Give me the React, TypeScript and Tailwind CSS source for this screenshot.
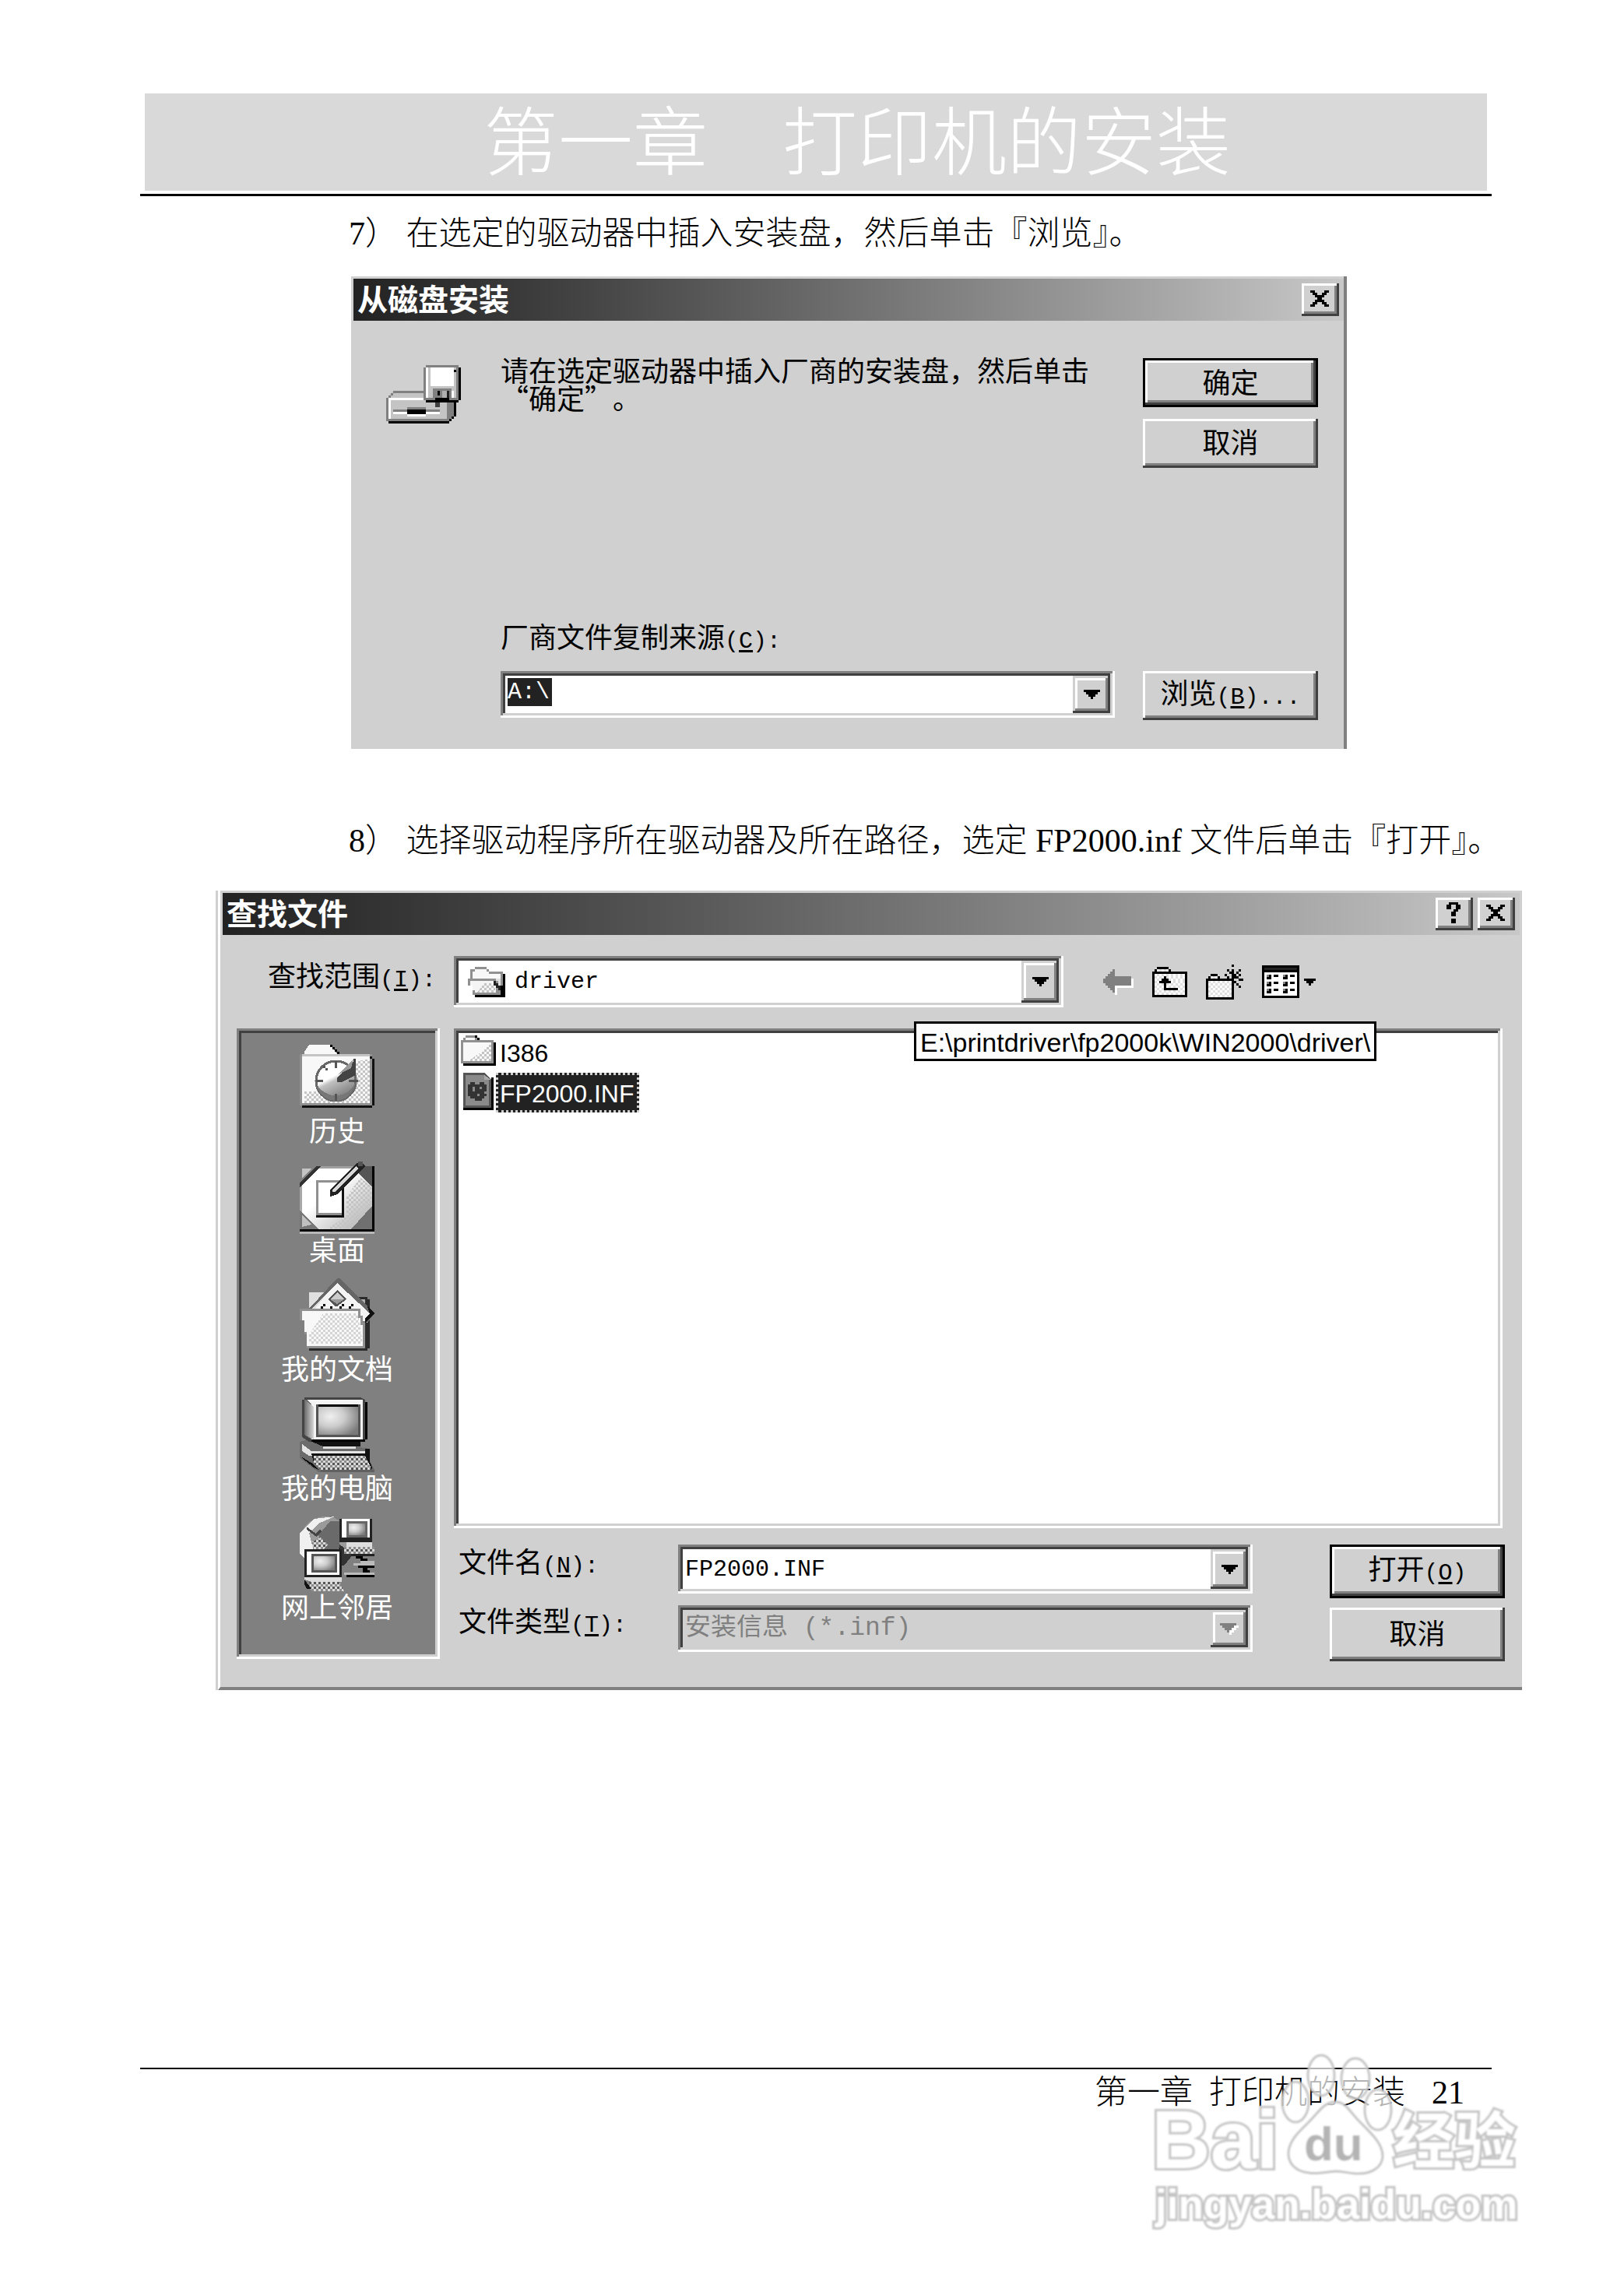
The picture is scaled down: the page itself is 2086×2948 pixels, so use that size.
import React from "react";

interface ChildrenProps {
  children: React.ReactNode;
}

const raised =
  "bg-[#d0d0d0] shadow-[inset_-3px_-3px_0_#404040,inset_3px_3px_0_#fff,inset_-6px_-6px_0_#808080]";
const raisedDefault =
  "bg-[#d0d0d0] border-[3px] border-black shadow-[inset_-3px_-3px_0_#404040,inset_3px_3px_0_#fff,inset_-6px_-6px_0_#808080]";
const raisedArrow =
  "bg-[#d0d0d0] shadow-[inset_-3px_-3px_0_#404040,inset_3px_3px_0_#d0d0d0,inset_-6px_-6px_0_#808080,inset_6px_6px_0_#fff]";
const sunken =
  "p-[6px] shadow-[inset_-3px_-3px_0_#fff,inset_3px_3px_0_#808080,inset_-6px_-6px_0_#d0d0d0,inset_6px_6px_0_#404040]";
const mono = "[font-family:'Liberation_Mono','Noto_Sans_CJK_SC',monospace]";

const shades: Record<string, string> = {
  "#": "#000000",
  d: "#222222",
  g: "#808080",
  o: "#e0e0e0",
  w: "#ffffff",
};

// one character per pixel, three screen pixels each
const Bitmap = ({ rows }: { rows: string[] }) => {
  const width = Math.max(...rows.map((r) => r.length));
  return (
    <svg
      width={width * 3}
      height={rows.length * 3}
      viewBox={`0 0 ${width} ${rows.length}`}
      shapeRendering="crispEdges"
      aria-hidden="true"
      className="shrink-0"
    >
      {rows.map((row, y) =>
        row
          .split("")
          .map((c, x) =>
            shades[c] ? (
              <rect key={`${x}-${y}`} x={x} y={y} width="1" height="1" fill={shades[c]} />
            ) : null
          )
      )}
    </svg>
  );
};

const closeRows = [
  "##....##",
  ".##..##.",
  "..####..",
  "...##...",
  "..####..",
  ".##..##.",
  "##....##",
];

const helpRows = [
  ".####.",
  "##..##",
  "##..##",
  "...##.",
  "..##..",
  "..##..",
  "......",
  "..##..",
  "..##..",
];

const downRows = ["#######", ".#####.", "..###..", "...#..."];
const downOffRows = ["ggggggg.", ".gggggww", "..gggww.", "...gww..", "....w..."];
const smallDownRows = ["#####", ".###.", "..#.."];

const backRows = [
  "....g........",
  "...gg........",
  "..ggg........",
  ".ggggggggggg.",
  "ggggggggggggw",
  "ggggggggggggw",
  ".gggggggggggw",
  "..gggwwwwwwww",
  "...ggw.......",
  "....gw.......",
  ".....w.......",
];

const upRows = [
  "..#####........",
  ".#wowow#.......",
  "###############",
  "#wowowowowowow#",
  "#owow#owowowow#",
  "#wow###owowowo#",
  "#ow#####wowowo#",
  "#wowo#owowowow#",
  "#owow#wowowowo#",
  "#wowo######wow#",
  "#owowowowowowo#",
  "#wowowowowowow#",
  "###############",
];

const newRows = [
  "...........#....",
  "...............",
  ".........#.#..#.",
  "..........##.#..",
  "..###...#..##.#.",
  ".#wow#...#.###..",
  "############..##",
  "#owowowowow##...",
  "#wowowowowo#.#..",
  "#owowowowow#..#.",
  "#wowowowowo#....",
  "#owowowowow#....",
  "#wowowowowo#....",
  "#owowowowow#....",
  "############....",
];

const viewRows = [
  "################",
  "#dddddddddddddd#",
  "################",
  "#wwwwwwwwwwwwww#",
  "#wg#w##wwg#w##w#",
  "#w##wwwww##wwww#",
  "#wwwwwwwwwwwwww#",
  "#wg#w##wwg#w##w#",
  "#w##wwwww##wwww#",
  "#wwwwwwwwwwwwww#",
  "#wg#w##wwg#w##w#",
  "#w##wwwww##wwww#",
  "#wwwwwwwwwwwwww#",
  "################",
];

const PatternDefs = () => (
  <svg width="0" height="0" className="absolute" aria-hidden="true">
    <defs>
      <pattern id="dither" width="2" height="2" patternUnits="userSpaceOnUse">
        <rect width="1" height="1" fill="#c4c4c4" />
        <rect x="1" y="1" width="1" height="1" fill="#c4c4c4" />
      </pattern>
      <pattern id="keys" width="2" height="2" patternUnits="userSpaceOnUse">
        <rect width="2" height="2" fill="#d8d8d8" />
        <rect width="1" height="1" fill="#555" />
        <rect x="1" y="1" width="1" height="1" fill="#8c8c8c" />
      </pattern>
      <radialGradient id="screen" cx="30%" cy="35%" r="80%">
        <stop offset="0" stopColor="#f0f0f0" />
        <stop offset="0.45" stopColor="#cccccc" />
        <stop offset="1" stopColor="#7a7a7a" />
      </radialGradient>
      <linearGradient id="dial" x1="0.2" y1="0" x2="0.7" y2="1">
        <stop offset="0.4" stopColor="#ffffff" />
        <stop offset="0.5" stopColor="#c0c0c0" />
        <stop offset="1" stopColor="#707070" />
      </linearGradient>
      <linearGradient id="sheet" x1="0" y1="0" x2="1" y2="1">
        <stop offset="0.4" stopColor="#ffffff" />
        <stop offset="1" stopColor="#a8a8a8" />
      </linearGradient>
      <linearGradient id="side" x1="0" y1="0" x2="1" y2="0">
        <stop offset="0" stopColor="#6a6a6a" />
        <stop offset="1" stopColor="#d8d8d8" />
      </linearGradient>
    </defs>
  </svg>
);

const Icon = ({
  children,
  w = 32,
  h = 32,
}: {
  children: React.ReactNode;
  w?: number;
  h?: number;
}) => (
  <svg
    width={w * 3}
    height={h * 3}
    viewBox={`0 0 ${w} ${h}`}
    shapeRendering="crispEdges"
    aria-hidden="true"
    className="shrink-0"
  >
    {children}
  </svg>
);

const DriveIcon = () => (
  <Icon h={25}>
    <path d="M1 14V13L3 11H17V15H1Z" fill="#c4c4c4" />
    <path d="M3 11H16V12H3ZM2 12H3V13H2ZM1 13H2V14H1Z" fill="#808080" />
    <path d="M26 15H29V22L26 24Z" fill="#808080" />
    <rect y="14" width="27" height="10" fill="#808080" />
    <rect x="1" y="14" width="25" height="9" fill="#fff" />
    <rect x="2" y="15" width="24" height="8" fill="#c4c4c4" />
    <rect x="3" y="19" width="20" height="1" fill="#808080" />
    <rect x="3" y="20" width="20" height="1" fill="#fff" />
    <rect x="9" y="18" width="8" height="1" fill="#808080" />
    <rect x="9" y="19" width="8" height="2" fill="#000" />
    <rect x="9" y="21" width="8" height="1" fill="#fff" />
    <path d="M29 16H30V22H29V23H28V24H27V25H1V24H27V23H28V22H29Z" fill="#000" />
    <path d="M17 0H31V15H16V1H17Z" fill="#808080" />
    <rect x="17" y="1" width="13" height="13" fill="#fff" />
    <rect x="18" y="1" width="12" height="13" fill="#c4c4c4" />
    <rect x="19" y="1" width="10" height="8" fill="#fff" />
    <rect x="29" y="2" width="1" height="1" fill="#000" />
    <rect x="20" y="10" width="8" height="4" fill="#808080" />
    <rect x="22" y="11" width="1" height="2" fill="#000" />
    <rect x="24" y="11" width="2" height="3" fill="#b0b0b0" />
    <rect x="26" y="11" width="1" height="3" fill="#222" />
    <rect x="28" y="11" width="1" height="3" fill="#fff" />
    <path d="M31 1H32V15H31V16H17V15H21V14H27V15H31Z" fill="#000" />
    <rect x="21" y="16" width="2" height="2" fill="#404040" />
  </Icon>
);

const HistoryIcon = () => (
  <Icon>
    <path d="M2 6V5L4 2H13L16 6Z" fill="#f8f8f8" />
    <path d="M13 2H14V3H15V4H16V5H17V6H16V5H15V4H14V3H13Z" fill="#000" />
    <rect y="6" width="31" height="22" fill="#909090" />
    <rect x="1" y="6" width="29" height="1" fill="#c4c4c4" />
    <rect x="1" y="7" width="29" height="20" fill="#f8f8f8" />
    <path d="M30 8V27H2V22H10L24 9Z" fill="url(#dither)" />
    <path d="M30 7H31V8H32V28H31V29H1V28H31V8H30Z" fill="#111" />
    <circle cx="15.5" cy="17.5" r="8.5" fill="url(#dial)" stroke="#686868" />
    <path d="M7 19C10 29 22 28 24 18C21 25 12 26 7 19Z" fill="#777" />
    <path d="M15 9H16V12H15ZM7 17H10V18H7ZM21 17H25V18H21ZM15 23H16V26H15ZM10 11H11V12H12V13H11V12H10Z" fill="#555" />
    <path d="M16 16L23 9V8H24V15L18 18H16Z" fill="#444" />
    <path d="M16 15L23 8L22 12Z" fill="#999" />
  </Icon>
);

const DesktopIcon = () => (
  <Icon>
    <rect y="3" width="31" height="27" fill="url(#sheet)" />
    <path d="M26 8L31 12V30H12L20 24V16Z" fill="url(#dither)" />
    <rect x="8" y="3" width="16" height="1" fill="#a0a0a0" />
    <rect y="11" width="1" height="12" fill="#a8a8a8" />
    <path d="M0 3H8L0 11Z" fill="#808080" />
    <path d="M1 4H5L1 8Z" fill="#c4c4c4" />
    <path d="M0 10L7 3H9L0 12Z" fill="#333" />
    <path d="M25 6L28 3H31V12Z" fill="#555" />
    <path d="M0 22L8 30H0Z" fill="#777" />
    <path d="M1 24L5 28L1 29Z" fill="#c0c0c0" />
    <path d="M31 20V30H22Z" fill="#707070" />
    <path d="M31 3H32V31H0V30H31Z" fill="#000" />
    <rect y="31" width="32" height="1" fill="#b8b8b8" />
    <rect x="7" y="9" width="12" height="15" fill="#909090" />
    <rect x="8" y="10" width="10" height="13" fill="#fff" />
    <path d="M18 11H19V25H7V24H18Z" fill="#111" />
    <path d="M13 16V13L24 2L26 1L28 3L16 15Z" fill="#222" />
    <path d="M14 14V13L24 3L25 4L15 14Z" fill="#d8d8d8" />
    <path d="M25 1H27V3H25Z" fill="#555" />
  </Icon>
);

const DocumentsIcon = () => (
  <Icon>
    <path d="M4 6H12V14H4Z" fill="#e0e0e0" />
    <path d="M25 8H29V9H30V30H28V12Z" fill="#2b2b2b" />
    <path d="M25 9H28V13H25Z" fill="#aaa" />
    <path d="M16 1L31 15L29 19L20 15H5Z" fill="#f4f4f4" />
    <path d="M16 0H17L32 15L29 19L28 18L30 15L16 2L5 13H4Z" fill="#666" />
    <path d="M29 12L32 15L28 19V17L30 15Z" fill="#111" />
    <path d="M16 5L20 9L16 12H15L12 9Z" fill="#555" />
    <path d="M16 6L19 9H13Z" fill="#ccc" />
    <path d="M13 9H19L16 11Z" fill="#999" />
    <path d="M9 12H10V11H11V12H10V13H9ZM13 12H14V13H13ZM17 12H18V11H19V12H18V13H17ZM21 12H22V11H23V12H22V13H21Z" fill="#000" />
    <path d="M0 13H26V16H27V19H28V30H3V24H2V18H0Z" fill="#909090" />
    <path d="M1 14H25V17H26V20H27V29H3V23H2V18H1Z" fill="#f8f8f8" />
    <path d="M10 15H25L27 28H4V24Z" fill="url(#dither)" opacity="0.7" />
    <path d="M28 20H30V30H29V31H4V30H28Z" fill="#2b2b2b" />
  </Icon>
);

const ComputerIcon = () => (
  <Icon>
    <path d="M0 19L4 18L30 22V27L32 31L30 32H8L0 26Z" fill="#6c6c6c" />
    <path d="M1 20L5 23H28V25H4L1 23Z" fill="#e4e4e4" />
    <path d="M0 25L5 28L8 31L6 30L1 26Z" fill="#111" />
    <path d="M3 18H26V21H10Z" fill="#111" />
    <path d="M10 21H24V22H10Z" fill="#ddd" />
    <path d="M28 22H30V28H28Z" fill="#111" />
    <path d="M5 24H29V25L31 30V31H9L6 28Z" fill="#111" />
    <path d="M6 25H28L31 31H9L6 28Z" fill="url(#keys)" />
    <rect x="9" y="31" width="23" height="1" fill="#606060" />
    <path d="M1 1H2V0H26L28 1V19H4L1 17Z" fill="#444" />
    <path d="M2 1H26V18H5L2 16Z" fill="url(#side)" />
    <path d="M3 1H27V18H5V3Z" fill="#f4f4f4" />
    <path d="M2 1L6 4V18L2 16Z" fill="url(#side)" />
    <rect x="7" y="3" width="19" height="14" fill="#555" />
    <rect x="8" y="3" width="17" height="1" fill="#000" />
    <rect x="8" y="4" width="17" height="12" fill="url(#screen)" />
    <path d="M28 2H29V18H28V19H5V18H28Z" fill="#000" />
  </Icon>
);

const NetworkIcon = () => (
  <Icon>
    <circle cx="11" cy="11" r="11" fill="#9a9a9a" />
    <path d="M0 16V7L6 1L15 0L8 3L4 7L6 15L3 19Z" fill="#f0f0f0" />
    <path d="M8 8L13 2H17V13L13 17L10 13Z" fill="#6a6a6a" />
    <path d="M5 11L9 9L12 12L9 15H6Z" fill="url(#keys)" />
    <path d="M3 5L7 8L9 6" stroke="#444" fill="none" />
    <path d="M17 12L23 16L19 21H16Z" fill="#333" />
    <rect x="17" y="1" width="14" height="10" fill="#222" />
    <rect x="18" y="1" width="12" height="8" fill="#fff" />
    <rect x="20" y="2" width="9" height="7" fill="#666" />
    <rect x="21" y="3" width="7" height="5" fill="url(#screen)" />
    <rect x="20" y="11" width="11" height="2" fill="#ddd" />
    <rect x="19" y="13" width="13" height="3" fill="url(#keys)" />
    <rect x="22" y="16" width="10" height="1" fill="#222" />
    <path d="M24 17H27V18H29V19H26V18H24ZM29 21H32V22H29V23H27V22H25V21ZM27 23H30V24H27Z" fill="#000" />
    <path d="M23 20H32V21H23ZM26 19H32V20H26ZM19 24H32V25H19Z" fill="#bbb" />
    <rect x="20" y="25" width="12" height="1" fill="#000" />
    <rect x="2" y="14" width="16" height="12" fill="#222" />
    <rect x="3" y="15" width="14" height="10" fill="#fff" />
    <rect x="5" y="16" width="11" height="8" fill="#555" />
    <rect x="6" y="17" width="9" height="6" fill="url(#screen)" />
    <path d="M2 26H18V28H5L2 27Z" fill="#ddd" />
    <path d="M2 27L5 31L3 31L2 29Z" fill="#111" />
    <path d="M4 28H17L19 32H5Z" fill="url(#keys)" />
  </Icon>
);

const FolderIcon = () => (
  <Icon w={15} h={13}>
    <path d="M1 2V1H2V0H7V1H8V2H14V12H0V2Z" fill="#909090" />
    <path d="M2 1H6V2H2ZM1 3H13V11H1Z" fill="#f8f8f8" />
    <path d="M13 3V11H3L9 7Z" fill="url(#dither)" />
    <path d="M6 0H7V1H8V2H7V1H6ZM14 3H15V13H1V12H14Z" fill="#000" />
  </Icon>
);

const OpenFolderIcon = () => (
  <Icon w={16} h={13}>
    <path d="M1 5V1H3V0H8V1H9V2H15V12H2V8H0V5Z" fill="#909090" />
    <path d="M2 2H3V1H8V2H9V3H14V5H2Z" fill="#f8f8f8" />
    <path d="M12 5H14V8H13V6H12Z" fill="#e0e0e0" />
    <path d="M1 6H11L12 8V11H3V10H2V8H1Z" fill="#f4f4f4" />
    <path d="M7 7H11L12 11H4Z" fill="url(#dither)" />
    <path d="M11 6H12V7H13V8H14V10H13V9H12V8H11Z" fill="#222" />
    <path d="M15 3H16V13H3V12H14V8H15Z" fill="#000" />
  </Icon>
);

const InfIcon = () => (
  <Icon w={13} h={16}>
    <path d="M0 0H9L12 3V15H0Z" fill="#555" />
    <path d="M1 1H9V3H11V14H1Z" fill="#8a8a8a" />
    <path d="M9 1L12 3H9Z" fill="#aaa" />
    <path d="M3 4H5V5H7V4H9V5H10V10H9V11H8V12H5V11H3V10H2V5H3Z" fill="#333" />
    <path d="M4 6H5V8H4ZM7 6H8V7H7ZM6 9H7V10H6ZM9 8H10V9H9Z" fill="#8a8a8a" />
    <path d="M12 2H13V16H0V15H12Z" fill="#000" />
  </Icon>
);

const TitleBar = ({ title, children }: ChildrenProps & { title: string }) => (
  <div className="flex h-[54px] items-center justify-between bg-linear-to-r from-[#222222] to-[#c8c8c8] pr-[6px] pl-[5px]">
    <h2 className="pb-[7px] text-[39px] leading-[42px] font-bold text-white">{title}</h2>
    <div className="flex gap-[6px]">{children}</div>
  </div>
);

const CaptionButton = ({ label, rows }: { label: string; rows: string[] }) => (
  <button
    aria-label={label}
    className={`flex h-[42px] w-[48px] items-center justify-center pr-[3px] pb-[3px] ${raised}`}
  >
    <Bitmap rows={rows} />
  </button>
);

const ArrowBox = ({ off }: { off?: boolean }) => (
  <span
    aria-hidden="true"
    className={`pointer-events-none flex w-[48px] shrink-0 items-center justify-center self-stretch ${raisedArrow}`}
  >
    <Bitmap rows={off ? downOffRows : downRows} />
  </span>
);

const AccessKey = ({ letter, tail = "" }: { letter: string; tail?: string }) => (
  <span className={`text-[30px] ${mono}`}>
    (<u className="decoration-[3px] underline-offset-[3px]">{letter}</u>){tail}
  </span>
);

const Step = ({ children }: ChildrenProps) => (
  <p className="pl-[448px] text-[42px] leading-[42px] font-light whitespace-nowrap">{children}</p>
);

const places = [
  { name: "历史", icon: <HistoryIcon /> },
  { name: "桌面", icon: <DesktopIcon /> },
  { name: "我的文档", icon: <DocumentsIcon /> },
  { name: "我的电脑", icon: <ComputerIcon /> },
  { name: "网上邻居", icon: <NetworkIcon /> },
];

const tools = [
  { name: "后退", rows: backRows },
  { name: "向上一级", rows: upRows },
  { name: "新建文件夹", rows: newRows },
];

const InstallDialog = () => (
  <section className="ml-[451px] max-w-[1279px] border-r-[4px] border-[#808080] bg-[#d0d0d0] pt-[3px] pl-[3px] text-[36px] leading-[36px] [font-family:'Noto_Sans_CJK_SC',sans-serif]">
    <TitleBar title="从磁盘安装">
      <CaptionButton label="关闭" rows={closeRows} />
    </TitleBar>
    <div className="pt-[44px] pr-[33px] pb-[37px] pl-[42px]">
      <div className="flex items-start">
        <div className="mt-[13px] mr-[51px]">
          <DriveIcon />
        </div>
        <p className="flex-1 [text-spacing-trim:space-all]">
          请在选定驱动器中插入厂商的安装盘，然后单击
          <br />
          “确定”。
        </p>
        <div className="mt-[4px] flex w-[225px] flex-col gap-[15px]">
          <button className={`h-[63px] pb-[6px] ${raisedDefault}`}>确定</button>
          <button className={`h-[63px] pb-[8px] ${raised}`}>取消</button>
        </div>
      </div>
      <div className="mt-[197px] ml-[147px]">
        <label htmlFor="source" className="block h-[36px]">
          厂商文件复制来源
          <AccessKey letter="C" tail=":" />
        </label>
        <div className="mt-[28px] flex items-start gap-[36px]">
          <div className={`flex h-[60px] flex-1 bg-white ${sunken}`}>
            <input
              id="source"
              defaultValue="A:\"
              className={`m-[3px] h-[36px] w-[57px] bg-[#222222] text-[30px] text-white ${mono}`}
            />
            <button aria-label="展开" className="ml-auto flex">
              <ArrowBox />
            </button>
          </div>
          <button className={`h-[63px] w-[225px] pb-[4px] ${raised}`}>
            浏览
            <AccessKey letter="B" tail="..." />
          </button>
        </div>
      </div>
    </div>
  </section>
);

const BrowseDialog = () => (
  <section className="ml-[277px] max-w-[1678px] border-l-[3px] border-[#d0d0d0] text-[36px] leading-[36px] [font-family:'Noto_Sans_CJK_SC',sans-serif]">
    <div className="border-b-[4px] border-l-[3px] border-b-[#808080] border-l-white bg-[#d0d0d0] px-[3px] pt-[3px]">
      <TitleBar title="查找文件">
        <CaptionButton label="帮助" rows={helpRows} />
        <CaptionButton label="关闭" rows={closeRows} />
      </TitleBar>
      <div className="grid grid-cols-[261px_1fr] gap-x-[18px] pt-[27px] pr-[19px] pb-[33px] pl-[18px]">
        <label htmlFor="range" className="pt-[5px] pl-[40px] whitespace-nowrap">
          查找范围
          <AccessKey letter="I" tail=":" />
        </label>
        <div className="flex items-center">
          <div className={`flex h-[66px] w-[783px] items-center bg-white ${sunken}`}>
            <div className="mr-[12px] ml-[12px]">
              <OpenFolderIcon />
            </div>
            <select id="range" className={`h-[48px] flex-1 appearance-none bg-white text-[30px] ${mono}`}>
              <option>driver</option>
            </select>
            <ArrowBox />
          </div>
          <div className="ml-[51px] flex items-center gap-[24px]">
            {tools.map((tool) => (
              <button key={tool.name} aria-label={tool.name}>
                <Bitmap rows={tool.rows} />
              </button>
            ))}
            <button aria-label="查看" className="flex items-center gap-[6px]">
              <Bitmap rows={viewRows} />
              <Bitmap rows={smallDownRows} />
            </button>
          </div>
        </div>

        <nav className={`row-span-2 mt-[27px] mb-[3px] flex flex-col items-center gap-[21px] bg-[#808080] text-white ${sunken}`}>
          {places.map((place) => (
            <button key={place.name} className="mr-[3px] flex flex-col items-center first:mt-[9px]">
              {place.icon}
              <span>{place.name}</span>
            </button>
          ))}
        </nav>
        <div className={`relative mt-[27px] mr-[3px] h-[642px] bg-white [font-family:'Liberation_Sans',sans-serif] ${sunken}`}>
          <ul className="flex flex-col items-start pt-[3px] pl-[3px] text-[32px]">
            <li className="flex h-[48px] items-start gap-[5px]">
              <FolderIcon />
              <span className="pt-[5px]">I386</span>
            </li>
            <li className="flex items-start gap-[3px] pl-[3px]">
              <InfIcon />
              <span className="h-[51px] border-[3px] border-dotted border-[#d0d0d0] bg-[#222222] pt-[6px] pr-[3px] pl-[2px] text-white">
                FP2000.INF
              </span>
            </li>
          </ul>
          <div
            role="tooltip"
            className="absolute top-[-9px] left-[591px] h-[51px] border-[3px] border-black bg-[#fcfcfc] px-[5px] pt-[6px] text-[34px] whitespace-nowrap"
          >
            E:\printdriver\fp2000k\WIN2000\driver\
          </div>
        </div>

        <div className="mt-[21px] flex items-start">
          <div className="grid flex-1 grid-cols-[282px_1fr] gap-y-[15px] pl-[6px]">
            <label htmlFor="name" className="pt-[2px]">
              文件名
              <AccessKey letter="N" tail=":" />
            </label>
            <div className={`flex h-[63px] bg-white ${sunken}`}>
              <input
                id="name"
                defaultValue="FP2000.INF"
                className={`w-full min-w-0 flex-1 pl-[3px] text-[30px] ${mono}`}
              />
              <button aria-label="展开" className="flex">
                <ArrowBox />
              </button>
            </div>
            <label htmlFor="type">
              文件类型
              <AccessKey letter="T" tail=":" />
            </label>
            <div className={`flex h-[60px] bg-[#d0d0d0] ${sunken}`}>
              <select
                id="type"
                disabled
                className={`min-w-0 flex-1 appearance-none bg-[#d0d0d0] pl-[3px] text-[33px] text-[#808080] opacity-100 ${mono}`}
              >
                <option>安装信息 (*.inf)</option>
              </select>
              <ArrowBox off />
            </div>
          </div>
          <div className="ml-[99px] flex w-[225px] flex-col gap-[12px]">
            <button className={`h-[69px] pb-[4px] ${raisedDefault}`}>
              打开
              <AccessKey letter="O" />
            </button>
            <button className={`h-[69px] pb-[8px] ${raised}`}>取消</button>
          </div>
        </div>
      </div>
    </div>
  </section>
);

const Watermark = () => (
  <svg
    width="490"
    height="240"
    viewBox="0 0 490 240"
    role="img"
    aria-label="Baidu 经验"
    className="absolute top-[-24px] right-[121px]"
  >
    <defs>
      <filter id="soft">
        <feGaussianBlur stdDeviation="1" />
      </filter>
    </defs>
    <g
      filter="url(#soft)"
      fill="#ffffff"
      stroke="#c4c4c4"
      strokeWidth="3"
      className="[font-family:'Liberation_Sans','Noto_Sans_CJK_SC',sans-serif] font-bold"
    >
      <g fillOpacity="0.7">
        <ellipse cx="222" cy="34" rx="17" ry="26" />
        <ellipse cx="266" cy="38" rx="18" ry="26" />
        <ellipse cx="189" cy="68" rx="17" ry="26" />
        <ellipse cx="295" cy="78" rx="17" ry="26" />
        <path d="M240 68C254 68 258 80 272 94C288 110 301 122 301 138C300 154 284 161 266 160C254 159 250 157 240 157C228 158 216 161 206 159C188 157 179 146 180 132C182 116 194 106 206 94C220 80 226 68 240 68Z" />
      </g>
      <text x="4" y="153" fontSize="105" strokeWidth="6" paintOrder="stroke">Bai</text>
      <text x="200" y="143" fontSize="62" fill="#b4b4b4" stroke="none">du</text>
      <text x="314" y="147" fontSize="79" strokeWidth="6" paintOrder="stroke">经验</text>
      <text x="9" y="218" fontSize="53" strokeWidth="6" paintOrder="stroke">jingyan.baidu.com</text>
    </g>
  </svg>
);

export default function App() {
  return (
    <main className="relative flex min-h-screen flex-col overflow-x-hidden bg-white pt-[120px] text-black [font-family:'Liberation_Serif','Noto_Sans_CJK_SC',serif]" lang="zh-CN">
      <PatternDefs />
      <header className="mr-[170px] ml-[180px] border-b-[3px] border-black pb-[4px]">
        <h1 className="mx-[6px] h-[125px] bg-[#d9d9d9] pl-[435px] text-[96px] leading-[129px] font-light whitespace-nowrap text-white">
          第一章　打印机的安装
        </h1>
      </header>
      <div className="mt-[27px] mb-[34px]">
        <Step>7） 在选定的驱动器中插入安装盘，然后单击『浏览』。</Step>
      </div>
      <InstallDialog />
      <div className="mt-[97px] mb-[43px]">
        <Step>8） 选择驱动程序所在驱动器及所在路径，选定 FP2000.inf 文件后单击『打开』。</Step>
      </div>
      <BrowseDialog />
      <footer className="relative mt-auto h-[292px]">
        <div className="mr-[170px] ml-[180px] flex justify-end gap-[34px] border-t-[2px] border-black pt-[9px] pr-[35px] text-[42px] leading-[42px] font-light">
          <span>第一章&nbsp; 打印机的安装</span>
          <span>21</span>
        </div>
        <Watermark />
      </footer>
    </main>
  );
}
